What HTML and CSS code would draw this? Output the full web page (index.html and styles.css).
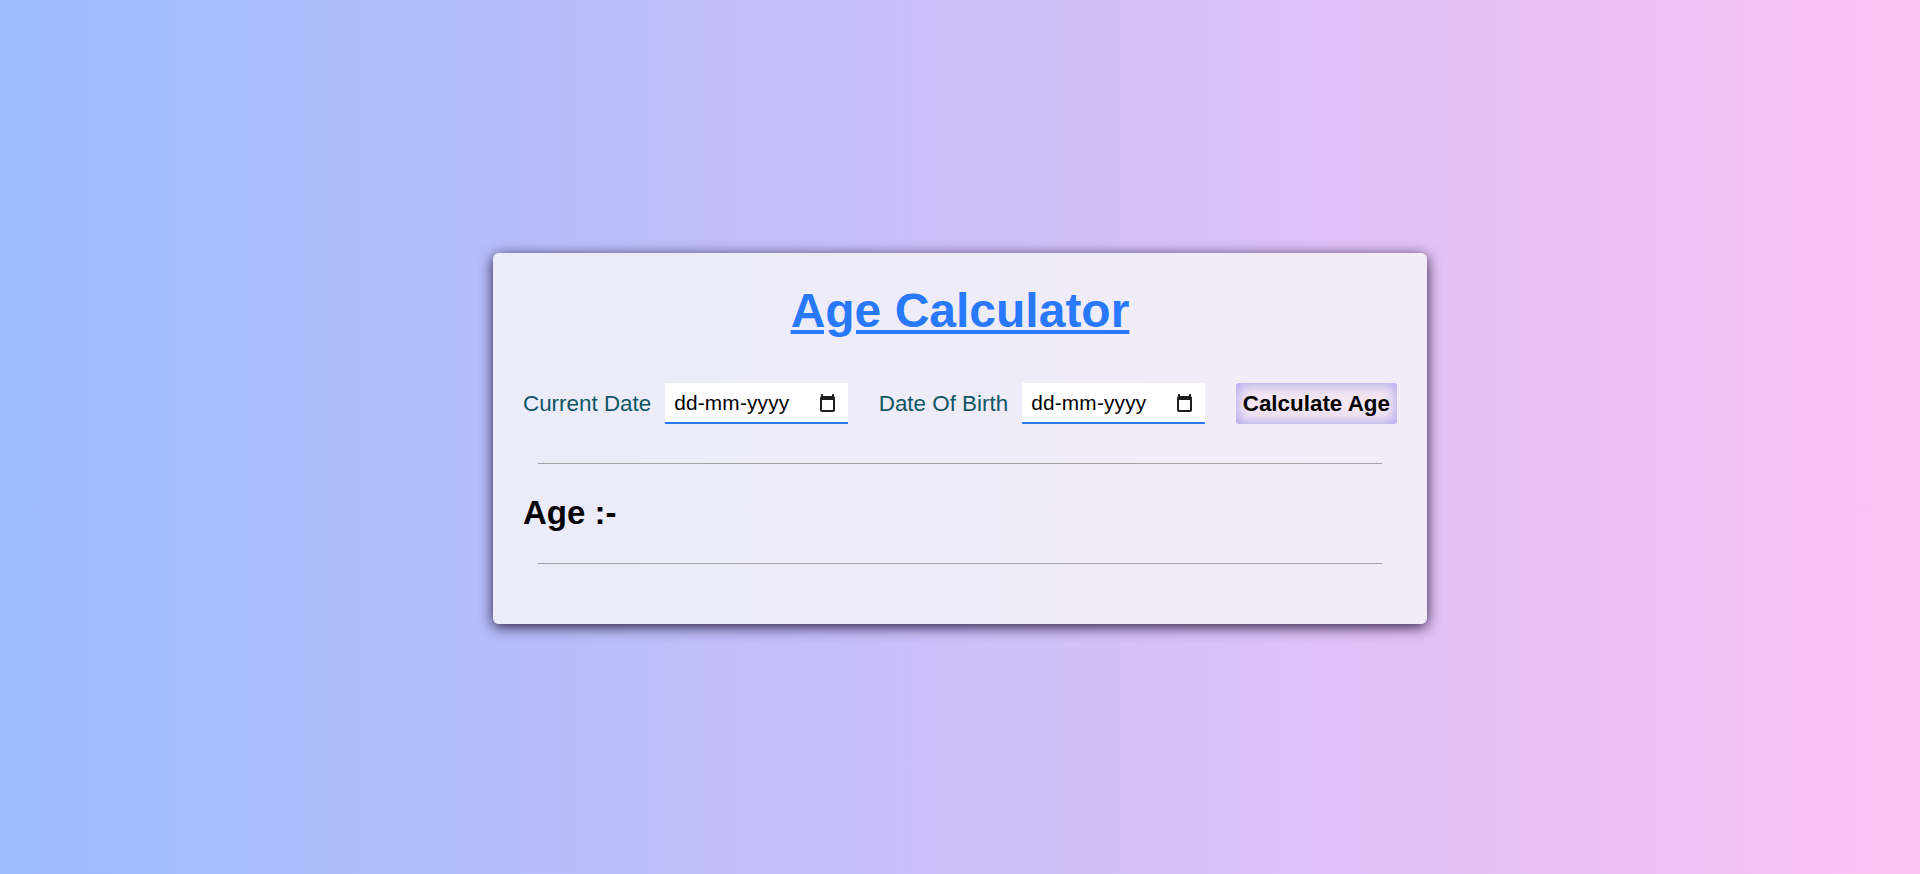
FILE: index.html
```html
<!DOCTYPE html>
<html lang="en">
<head>
<meta charset="UTF-8">
<title>Age Calculator</title>
<link rel="stylesheet" href="styles.css">
</head>
<body>
  <div class="card">
    <h1 class="title">Age Calculator</h1>
    <div class="row">
      <div class="field">
        <label class="label" for="cur">Current Date</label>
        <div class="date-box">
          <input class="date-text" type="text" id="cur" placeholder="dd-mm-yyyy">
          <svg class="cal-icon" width="15" height="18" viewBox="0 0 15 18" aria-hidden="true">
            <rect x="1" y="0" width="2" height="4" rx="0.5" fill="#1e1e1e"/>
            <rect x="12" y="0" width="2" height="4" rx="0.5" fill="#1e1e1e"/>
            <path d="M2 2 H13 A2 2 0 0 1 15 4 V16 A2 2 0 0 1 13 18 H2 A2 2 0 0 1 0 16 V4 A2 2 0 0 1 2 2 Z M2 6 V15.5 A0.5 0.5 0 0 0 2.5 16 H12.5 A0.5 0.5 0 0 0 13 15.5 V6 Z" fill="#1e1e1e" fill-rule="evenodd"/>
          </svg>
        </div>
      </div>
      <div class="field">
        <label class="label" for="dob">Date Of Birth</label>
        <div class="date-box">
          <input class="date-text" type="text" id="dob" placeholder="dd-mm-yyyy">
          <svg class="cal-icon" width="15" height="18" viewBox="0 0 15 18" aria-hidden="true">
            <rect x="1" y="0" width="2" height="4" rx="0.5" fill="#1e1e1e"/>
            <rect x="12" y="0" width="2" height="4" rx="0.5" fill="#1e1e1e"/>
            <path d="M2 2 H13 A2 2 0 0 1 15 4 V16 A2 2 0 0 1 13 18 H2 A2 2 0 0 1 0 16 V4 A2 2 0 0 1 2 2 Z M2 6 V15.5 A0.5 0.5 0 0 0 2.5 16 H12.5 A0.5 0.5 0 0 0 13 15.5 V6 Z" fill="#1e1e1e" fill-rule="evenodd"/>
          </svg>
        </div>
      </div>
      <button class="calc-btn" type="button">Calculate Age</button>
    </div>
    <hr class="divider divider-top">
    <h2 class="age">Age :-</h2>
    <hr class="divider divider-bottom">
  </div>
</body>
</html>
```

FILE: styles.css
```css
html, body {
  margin: 0;
  padding: 0;
}

body {
  height: 100vh;
  box-sizing: border-box;
  padding-top: 3px;
  display: flex;
  align-items: center;
  justify-content: center;
  background: linear-gradient(to right, #9cbcfe, #fcc2f3);
  font-family: "Liberation Sans", Arial, sans-serif;
}

.card {
  width: 934px;
  box-sizing: border-box;
  padding: 30px 30px 60px;
  border-radius: 6px;
  background: linear-gradient(to right, #ebecf9, #f2ecf8);
  box-shadow: 0 3px 14px rgba(25, 10, 45, 0.9);
}

.title {
  margin: 0;
  text-align: center;
  font-size: 48px;
  font-weight: bold;
  line-height: normal;
  color: #2979ff;
  text-decoration: underline;
}

.row {
  margin-top: 45px;
  display: flex;
  align-items: center;
  justify-content: space-between;
}

.field {
  display: flex;
  align-items: center;
  gap: 14px;
}

.label {
  font-size: 22.4px;
  color: #0d5663;
}

.date-box {
  width: 183px;
  height: 41px;
  box-sizing: border-box;
  display: flex;
  align-items: center;
  padding: 0 13px 0 9px;
  background: #fff;
  border-bottom: 2px solid #2979ff;
}

.date-text {
  flex: 1;
  min-width: 0;
  border: none;
  outline: none;
  padding: 0;
  background: transparent;
  font-family: "Liberation Sans", Arial, sans-serif;
  font-size: 20.8px;
  letter-spacing: 0.2px;
  color: #000;
}

.date-text::placeholder {
  color: #000;
  opacity: 1;
}

.cal-icon {
  flex: none;
  display: block;
}

.calc-btn {
  height: 41px;
  padding: 0 7px;
  border: none;
  border-radius: 3px;
  background: #f4e7f1;
  box-shadow: inset 0 0 14px 1px #a69ff0;
  font-family: "Liberation Sans", Arial, sans-serif;
  font-size: 22.4px;
  font-weight: bold;
  color: #000;
}

.divider {
  height: 0;
  border: none;
  border-top: 1px solid #a3a3a3;
  margin: 0 15px;
}

.divider-top {
  margin-top: 39px;
}

.age {
  margin: 30px 0 0;
  font-size: 33px;
  font-weight: bold;
  line-height: normal;
  color: #000;
}

.divider-bottom {
  margin-top: 31px;
}
```
